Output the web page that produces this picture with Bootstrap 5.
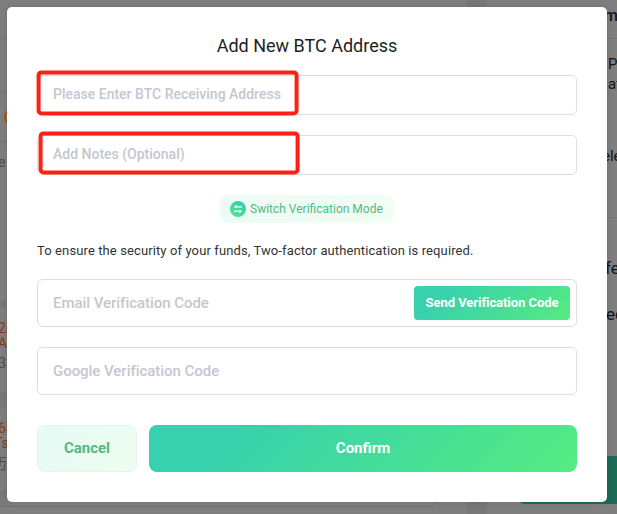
<!DOCTYPE html>
<html lang="en">
<head>
<meta charset="utf-8">
<meta name="viewport" content="width=device-width, initial-scale=1">
<title>Add New BTC Address</title>
<link href="https://cdn.jsdelivr.net/npm/bootstrap@5.3.0/dist/css/bootstrap.min.css" rel="stylesheet">
<style>
body{font-family:Roboto,"Noto Sans CJK SC",sans-serif;background:#7f7f7f;width:617px;height:514px;overflow:hidden;position:relative}
/* dimmed page behind the dialog */
.page-behind{position:absolute;inset:0;overflow:hidden}
.page-behind>*{position:absolute;white-space:nowrap;line-height:1}
.rule{height:1px;background:#747474}
.gutter{left:467px;top:0;width:20px;height:514px;background:#787878}
.gap-band{left:0;width:7px;background:#797979}
.bg-dark-text{color:#151515;font-size:16px}
.bg-orange{color:#873b20;font-size:14px}
.bg-gray{color:#4b4e54;font-size:14px}
.coin{left:4px;top:108px;width:18px;height:18px;border:2px solid #a3560d;border-radius:50%}
.page-btn{left:517px;top:456px;width:120px;height:48px;border-radius:8px;background:#1c6b56}
.field-edge{left:-20px;top:470px;width:456px;height:37px;border:1px solid #717171;border-radius:6px}
/* dialog */
.address-dialog{width:600px;height:495px;margin:7px 0 0 7px;border-radius:5px;padding:24px 30px 30px;position:relative;box-shadow:0 0 8px rgba(0,0,0,.12)}
.dialog-title{font-size:18px;line-height:30px;font-weight:400;color:#1e1f21;margin:0 0 14px}
.form-control{border-color:#dcdde6;border-radius:5px;padding:0 15px;font-size:15px;color:#333}
.form-control::placeholder{color:#c4c7d0;opacity:1;font-weight:500;letter-spacing:-.04px}
.form-control.short-field{height:40px;margin-bottom:20px;font-size:14px;padding-bottom:2px}
.short-field::placeholder{letter-spacing:0}
.tall-field{height:48px}
.switch-mode{height:28px;border-radius:8px;padding:0 10px;background:linear-gradient(120deg,#edfbf6,#f2fdf3);color:#50ba86;font-size:12px;gap:4px;width:174px;white-space:nowrap}
.notice{font-size:13px;line-height:20px;color:#333;margin:18px 0 18px;white-space:nowrap;letter-spacing:.11px}
.code-group{height:48px;border:1px solid #dcdde6;border-radius:6px;padding-right:6px;margin-bottom:20px}
.btn-send{width:156px;height:34px;padding:0;border:0;border-radius:4px;font-size:13px;font-weight:700;color:#fff;letter-spacing:-.05px}
.green-fill{background:linear-gradient(135deg,#37d1ad 18%,#55eb81)}
.btn-tall{height:47px;border-radius:8px;font-size:15px;font-weight:700;padding:0}
.btn-cancel{width:100px;color:#50b984;border:1px solid #e3f5ec;background:linear-gradient(120deg,#e8faf6,#edfdef)}
.btn-confirm{color:#fff;border:0;background:linear-gradient(135deg,#37d1ad 20%,#55eb81)}
.marker-box{position:absolute;border:4px solid #ff2015;border-radius:5px;pointer-events:none;transform:translate(-.4px,.4px)}
.marker-address{left:30px;top:63px;width:262px;height:45px}
.marker-notes{left:32px;top:124px;width:261px;height:43px}
</style>
</head>
<body>
<div class="page-behind" aria-hidden="true">
  <div class="gutter"></div>
  <div class="rule" style="left:0;top:38px;width:467px"></div>
  <div class="rule" style="left:0;top:92px;width:7px"></div>
  <div class="rule" style="left:0;top:141px;width:7px"></div>
  <div class="gap-band" style="top:300px;height:8px"></div>
  <div class="gap-band" style="top:391px;height:16px"></div>
  <div class="gap-band" style="top:490px;height:16px"></div>
  <div class="coin"></div>
  <span class="bg-gray" style="left:-2px;top:155px">e</span>
  <span class="bg-orange" style="left:-2px;top:321px">2i</span>
  <span class="bg-orange" style="left:-2px;top:336px">A</span>
  <span class="bg-gray" style="left:-2px;top:356px">33</span>
  <span class="bg-orange" style="left:-2px;top:421px">6l</span>
  <span class="bg-orange" style="left:-6px;top:436px">Ts</span>
  <span class="bg-gray" style="left:-7px;top:456px">历量</span>
  <div class="rule" style="left:487px;top:38px;width:130px"></div>
  <div class="rule" style="left:487px;top:217px;width:130px"></div>
  <span class="bg-dark-text" style="left:604px;top:8px;font-weight:500">m</span>
  <span class="bg-dark-text" style="left:608px;top:57px;font-size:15px">P</span>
  <span class="bg-dark-text" style="left:608px;top:77px;font-size:15px">at</span>
  <span class="bg-dark-text" style="left:602px;top:149px;font-size:15px">ele</span>
  <span class="bg-dark-text" style="left:605px;top:260px;font-size:17px">fe</span>
  <span class="bg-dark-text" style="left:606px;top:306px;font-size:17px">ec</span>
  <div class="field-edge"></div>
  <div class="page-btn"></div>
</div>
<main class="address-dialog bg-white d-flex flex-column">
  <h1 class="dialog-title text-center">Add New BTC Address</h1>
  <input class="form-control short-field" type="text" placeholder="Please Enter BTC Receiving Address">
  <input class="form-control short-field" type="text" placeholder="Add Notes (Optional)">
  <button type="button" class="switch-mode border-0 d-flex align-items-center align-self-center">
    <svg class="flex-shrink-0" width="16" height="16" viewBox="0 0 16 16" aria-hidden="true">
      <defs><linearGradient id="sw" x1="1" y1="0" x2="0" y2="1"><stop offset=".2" stop-color="#37cfb0"/><stop offset="1" stop-color="#50e982"/></linearGradient></defs>
      <circle cx="8" cy="8" r="8" fill="url(#sw)"/>
      <path d="M12 5.9H5M4 10.1h7" fill="none" stroke="#fff" stroke-width="1.3"/>
      <path d="M3.6 6.2 6.6 3.4v3.2zM12.4 9.8 9.4 12.6V9.4z" fill="#fff"/>
    </svg>
    <span>Switch Verification Mode</span>
  </button>
  <p class="notice">To ensure the security of your funds, Two-factor authentication is required.</p>
  <div class="code-group d-flex align-items-center">
    <input class="form-control border-0 h-100 bg-transparent" type="text" placeholder="Email Verification Code">
    <button type="button" class="btn btn-send green-fill flex-shrink-0">Send Verification Code</button>
  </div>
  <input class="form-control tall-field" type="text" placeholder="Google Verification Code">
  <div class="d-flex mt-auto" style="gap:12px">
    <button type="button" class="btn btn-tall btn-cancel flex-shrink-0">Cancel</button>
    <button type="button" class="btn btn-tall btn-confirm flex-grow-1">Confirm</button>
  </div>
  <div class="marker-box marker-address"></div>
  <div class="marker-box marker-notes"></div>
</main>
<script src="https://cdn.jsdelivr.net/npm/bootstrap@5.3.0/dist/js/bootstrap.bundle.min.js"></script>
</body>
</html>
